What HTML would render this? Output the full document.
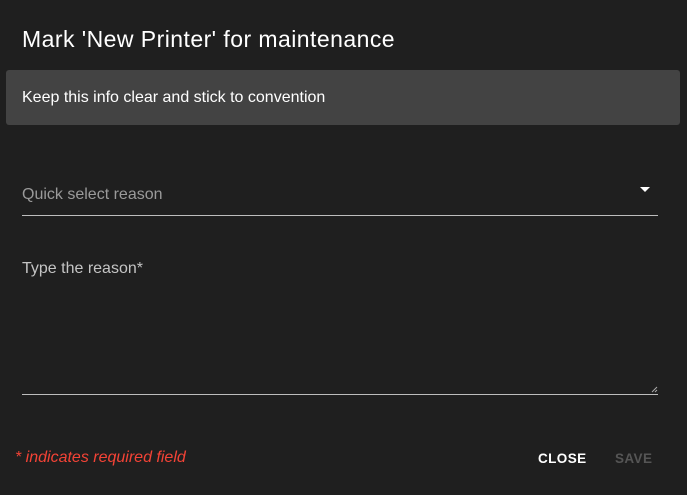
<!DOCTYPE html>
<html><head><style>
body{margin:0;width:687px;height:495px;background:#1f1f1f;font-family:"Liberation Sans",sans-serif;position:relative;overflow:hidden;color:#fff}
.a{position:absolute;white-space:nowrap}
</style></head><body>
<div class="a" style="left:22px;top:26px;font-size:23px;letter-spacing:0.45px">Mark 'New Printer' for maintenance</div>
<div class="a" style="left:6px;top:70px;width:674px;height:55px;background:#434343;border-radius:3px"></div>
<div class="a" style="left:22px;top:89px;font-size:16px;letter-spacing:0px">Keep this info clear and stick to convention</div>
<div class="a" style="left:22px;top:186px;font-size:16px;color:#9a9a9a;letter-spacing:0px">Quick select reason</div>
<div class="a" style="left:640px;top:187px;width:0;height:0;border-left:5px solid transparent;border-right:5px solid transparent;border-top:5px solid #fff"></div>
<div class="a" style="left:22px;top:215px;width:636px;height:1px;background:#bdbdbd"></div>
<div class="a" style="left:22px;top:260px;font-size:16px;color:#c4c4c4;letter-spacing:0px">Type the reason*</div>
<div class="a" style="left:22px;top:394px;width:636px;height:1px;background:#bdbdbd"></div>
<svg class="a" style="left:651px;top:386px" width="7" height="7"><path d="M1 6L6 1M4 6L6 4" stroke="#aaa" stroke-width="1"/></svg>
<div class="a" style="left:15px;top:449px;font-size:16px;color:#f44336;font-style:italic;letter-spacing:0px">* indicates required field</div>
<div class="a" style="left:538px;top:451px;font-size:13.5px;font-weight:bold;letter-spacing:0.4px">CLOSE</div>
<div class="a" style="left:615px;top:451px;font-size:13.5px;font-weight:bold;letter-spacing:0.4px;color:#555">SAVE</div>
</body></html>
